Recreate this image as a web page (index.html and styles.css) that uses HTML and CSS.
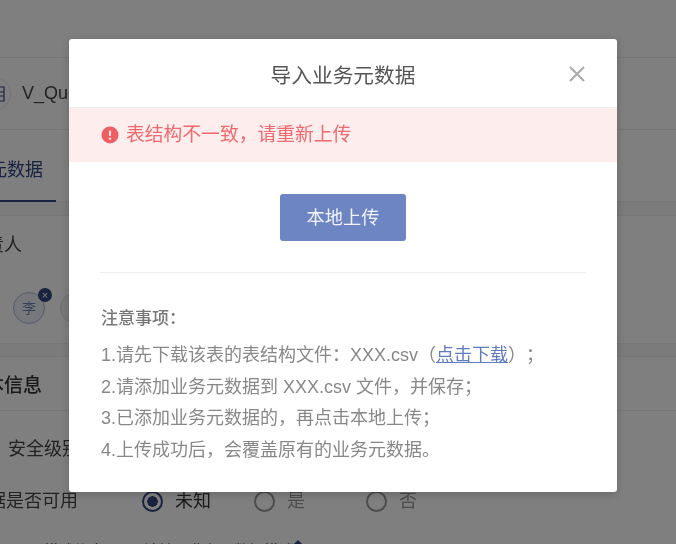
FILE: index.html
```html
<!DOCTYPE html>
<html lang="zh-CN">
<head>
    <meta charset="UTF-8">
    <meta name="viewport" content="width=device-width, initial-scale=1.0">
    <title>导入业务元数据</title>
    <link rel="stylesheet" href="styles.css">
</head>
<body>
    <div class="page">
        <div class="table-head">
            <span class="table-icon">
                <svg width="14" height="18" viewBox="0 0 14 18"><path d="M1 2h9v14H1zM1 7h9M1 11h9M5 2v14" fill="none" stroke="#33457f" stroke-width="1.2"/></svg>
            </span>
            <span class="table-name">V_Query</span>
        </div>
        <div class="tabs">
            <span class="tab-active">业务元数据</span>
        </div>
        <div class="band"></div>
        <div class="owner-title">负责人</div>
        <div class="owner-list">
            <span class="avatar">李<span class="avatar-del">×</span></span>
            <span class="avatar avatar-green">王</span>
        </div>
        <div class="band band-two"></div>
        <div class="section-title">基本信息</div>
        <div class="field field-level">安全级别</div>
        <div class="field field-usable">
            <span class="field-label">数据是否可用</span>
            <label class="radio radio-on"><i></i>未知</label>
            <label class="radio radio-off"><i></i>是</label>
            <label class="radio radio-off"><i></i>否</label>
        </div>
        <div class="field field-last">
            <span class="last-a">描述信息</span>
            <span class="last-b">请输入业务元数据描述</span>
            <span class="last-mark"></span>
        </div>
    </div>

    <div class="overlay"></div>

    <div class="dialog">
        <div class="dialog-head">
            <h2>导入业务元数据</h2>
            <svg class="dialog-close" width="16" height="16" viewBox="0 0 16 16"><path d="M1 1l14 14M15 1L1 15" stroke="#a9a9a9" stroke-width="2" fill="none"/></svg>
        </div>
        <div class="alert">
            <svg width="18" height="18" viewBox="0 0 18 18"><circle cx="9" cy="9" r="8.5" fill="#ee5f63"/><rect x="7.9" y="4.5" width="2.2" height="5.5" rx="1" fill="#fde3e3"/><circle cx="9" cy="12.6" r="1.2" fill="#fde3e3"/></svg>
            <span>表结构不一致，请重新上传</span>
        </div>
        <div class="dialog-body">
            <div class="upload-row">
                <button class="upload-btn">本地上传</button>
            </div>
            <div class="notes">
                <h3>注意事项：</h3>
                <p>1.请先下载该表的表结构文件：XXX.csv（<a href="#">点击下载</a>）；</p>
                <p>2.请添加业务元数据到 XXX.csv 文件，并保存；</p>
                <p>3.已添加业务元数据的，再点击本地上传；</p>
                <p>4.上传成功后，会覆盖原有的业务元数据。</p>
            </div>
        </div>
    </div>
</body>
</html>
```

FILE: styles.css
```css
* {
    margin: 0;
    padding: 0;
    box-sizing: border-box;
}
html, body {
    height: 100%;
    overflow: hidden;
}
body {
    font-family: "Liberation Sans", "Noto Sans CJK SC", sans-serif;
    background: #fff;
    color: #333;
    text-spacing-trim: space-all;
}
.page {
    height: 544px;
    overflow: hidden;
    padding-top: 57px;
    filter: blur(0.5px);
}
.table-head {
    height: 73px;
    border-top: 1px solid #eee;
    border-bottom: 1px solid #eee;
    display: flex;
    align-items: center;
    font-size: 18px;
    color: #444;
}
.table-icon {
    width: 34px;
    height: 34px;
    margin-left: -23px;
    border: 1px solid #e6e6e6;
    border-radius: 50%;
    display: flex;
    align-items: center;
    justify-content: center;
}
.table-icon svg {
    margin-left: 14px;
}
.table-name {
    margin-left: 11px;
}
.tabs {
    height: 73px;
    border-bottom: 1px solid #eee;
    margin-top: -1px;
    font-size: 18px;
    color: #33457f;
}
.tab-active {
    display: inline-block;
    height: 73px;
    margin-left: -47px;
    padding: 29px 13px 0 0;
    line-height: 24px;
    border-bottom: 2px solid #33457f;
}
.band {
    height: 14px;
    background: #f7f7f7;
    border-bottom: 1px solid #eee;
}
.owner-title {
    height: 56px;
    margin-left: -32px;
    font-size: 18px;
    line-height: 58px;
    color: #444;
}
.owner-list {
    height: 71px;
    display: flex;
    align-items: flex-start;
    gap: 15px;
    padding: 20px 0 0 13px;
}
.avatar {
    position: relative;
    width: 32px;
    height: 32px;
    flex: none;
    border: 1px solid #aab4d8;
    background: #eef0f8;
    border-radius: 50%;
    color: #6d7fb8;
    font-size: 14px;
    line-height: 30px;
    text-align: center;
}
.avatar-green {
    border-color: #cfe0cf;
    background: #eef5ee;
    color: #7aa07a;
}
.avatar-del {
    position: absolute;
    top: -5px;
    right: -8px;
    width: 14px;
    height: 14px;
    border-radius: 50%;
    background: #33457f;
    color: #fff;
    font-size: 11px;
    line-height: 14px;
}
.band-two {
    border-top: 1px solid #eee;
}
.section-title {
    height: 54px;
    margin-left: -34px;
    border-bottom: 1px solid #eee;
    font-size: 19px;
    font-weight: 500;
    line-height: 58px;
    color: #333;
}
.field {
    font-size: 18px;
    color: #444;
}
.field-level {
    height: 64px;
    padding: 26px 0 0 8px;
    line-height: 24px;
}
.field-usable {
    height: 52px;
    display: flex;
    align-items: center;
    line-height: 24px;
}
.field-label {
    width: 172px;
    margin-left: -30px;
    flex: none;
    white-space: nowrap;
}
.radio {
    display: flex;
    align-items: center;
    width: 112px;
    flex: none;
    color: #999;
}
.radio i {
    width: 21px;
    height: 21px;
    margin-right: 12px;
    border: 2px solid #999;
    border-radius: 50%;
}
.radio-on {
    color: #333;
}
.radio-on i {
    border-color: #33457f;
    background: radial-gradient(circle, #33457f 0 5px, #fff 5.5px);
}
.field-last {
    margin-top: 12px;
    height: 24px;
    line-height: 24px;
    display: flex;
    white-space: nowrap;
    font-size: 15px;
}
.last-a {
    margin-left: 44px;
}
.last-b {
    margin-left: 40px;
}
.last-mark {
    width: 10px;
    height: 10px;
    margin: 3px 0 0 -1px;
    background: #33457f;
    transform: rotate(45deg);
}
.overlay {
    position: fixed;
    inset: 0;
    background: rgba(0, 0, 0, 0.5);
}
.dialog {
    position: fixed;
    left: 69px;
    top: 39px;
    width: 548px;
    height: 453px;
    background: #fff;
    border-radius: 3px;
    box-shadow: 0 2px 10px rgba(0, 0, 0, 0.2);
    overflow: hidden;
    filter: blur(0.4px);
}
.dialog-head {
    position: relative;
    height: 69px;
    border-bottom: 1px solid #ececec;
    text-align: center;
}
.dialog-head h2 {
    font-size: 20.7px;
    font-weight: 400;
    line-height: 74px;
    color: #555;
}
.dialog-close {
    position: absolute;
    top: 27px;
    right: 32px;
}
.alert {
    height: 54px;
    padding-left: 32px;
    background: #fdeded;
    display: flex;
    align-items: center;
    gap: 7px;
    font-size: 18.8px;
    color: #ee6a6e;
}
.alert span {
    line-height: 24px;
    margin-top: -1px;
}
.dialog-body {
    padding: 32px 31px 0;
}
.upload-row {
    height: 79px;
    border-bottom: 1px solid #eee;
    text-align: center;
}
.upload-btn {
    width: 126px;
    height: 47px;
    padding-bottom: 3px;
    border: 0;
    border-radius: 3px;
    background: #6d85c3;
    color: #f2f4fa;
    font-family: inherit;
    font-size: 18.2px;
}
.notes {
    padding-top: 31px;
    padding-left: 1px;
    font-size: 18px;
    line-height: 31.5px;
    color: #888;
    white-space: nowrap;
}
.notes h3 {
    font-size: 17px;
    font-weight: 500;
    color: #777;
    line-height: 29px;
    margin-bottom: 7px;
}
.notes a {
    color: #5f7cc0;
}
```
